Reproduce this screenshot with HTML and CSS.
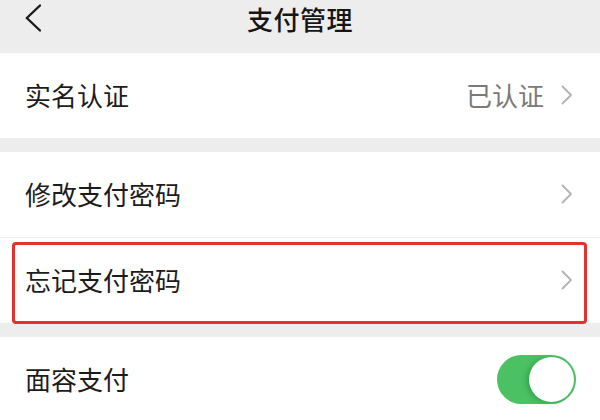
FILE: index.html
```html
<!DOCTYPE html>
<html lang="zh-CN">
<head>
<meta charset="utf-8">
<title>支付管理</title>
<link rel="stylesheet" href="styles.css">
</head>
<body>
<div class="page">
  <header class="nav">
    <div class="nav-left">
      <svg class="back" width="16" height="28" viewBox="0 0 16 28"><path d="M15 1.5 L1.8 14 L15 26.5" fill="none" stroke="#1a1a1a" stroke-width="2.4" stroke-linecap="round" stroke-linejoin="round"/></svg>
    </div>
    <div class="nav-title">支付管理</div>
    <div class="nav-right"></div>
  </header>

  <section class="group">
    <div class="row">
      <span class="label">实名认证</span>
      <span class="right"><span class="value">已认证</span><svg class="chev" width="12" height="20" viewBox="0 0 12 20"><path d="M1.5 1.5 L10 10 L1.5 18.5" fill="none" stroke="#b3b3b3" stroke-width="1.8" stroke-linecap="round" stroke-linejoin="round"/></svg></span>
    </div>
  </section>

  <section class="group">
    <div class="row line">
      <span class="label">修改支付密码</span>
      <span class="right"><svg class="chev" width="12" height="20" viewBox="0 0 12 20"><path d="M1.5 1.5 L10 10 L1.5 18.5" fill="none" stroke="#b3b3b3" stroke-width="1.8" stroke-linecap="round" stroke-linejoin="round"/></svg></span>
    </div>
    <div class="row marked">
      <span class="label">忘记支付密码</span>
      <span class="right"><svg class="chev" width="12" height="20" viewBox="0 0 12 20"><path d="M1.5 1.5 L10 10 L1.5 18.5" fill="none" stroke="#b3b3b3" stroke-width="1.8" stroke-linecap="round" stroke-linejoin="round"/></svg></span>
      <span class="highlight"></span>
    </div>
  </section>

  <section class="group">
    <div class="row">
      <span class="label">面容支付</span>
      <span class="toggle"><span class="knob"></span></span>
    </div>
  </section>
</div>
</body>
</html>
```

FILE: styles.css
```css
html, body {
  margin: 0;
  padding: 0;
  background: #ededed;
}
body {
  font-family: "Noto Sans CJK SC", "Noto Sans", sans-serif;
  color: #1a1a1a;
}
.page {
  width: 600px;
  height: 420px;
  overflow: hidden;
  background: #ededed;
}
.nav {
  height: 53px;
  box-sizing: border-box;
  padding-top: 1px;
  display: grid;
  grid-template-columns: 1fr auto 1fr;
  align-items: start;
}
.nav-left {
  padding-left: 25px;
  padding-top: 3px;
}
.back {
  display: block;
}
.nav-title {
  font-size: 26px;
  font-weight: 500;
  line-height: 36px;
  letter-spacing: 0.5px;
  color: #161616;
}
.group {
  background: #fff;
  margin-bottom: 14px;
}
.row {
  position: relative;
  height: 85px;
  display: flex;
  align-items: center;
  justify-content: space-between;
  padding: 0 24px 0 25px;
}
.row.line {
  border-bottom: 1px solid #ececec;
}
.label {
  font-size: 26px;
  line-height: 1;
  color: #1c1c1c;
  position: relative;
  top: -1px;
}
.right {
  display: flex;
  align-items: center;
  gap: 17px;
  padding-right: 3px;
}
.value {
  font-size: 26px;
  line-height: 1;
  color: #7a7a7a;
  position: relative;
  top: -1px;
}
.chev {
  display: block;
  position: relative;
  top: -1px;
}
.highlight {
  position: absolute;
  top: 4px;
  bottom: -1px;
  left: 12px;
  right: 13px;
  border: 3px solid #e5302b;
  border-radius: 4px;
  pointer-events: none;
}
.toggle {
  width: 79px;
  height: 49px;
  border-radius: 25px;
  background: #4bc164;
  position: relative;
  box-sizing: border-box;
}
.knob {
  position: absolute;
  right: 2px;
  top: 2px;
  width: 45px;
  height: 45px;
  border-radius: 50%;
  background: #fff;
  box-shadow: -3px 1px 5px rgba(0, 80, 20, 0.25);
}
```
